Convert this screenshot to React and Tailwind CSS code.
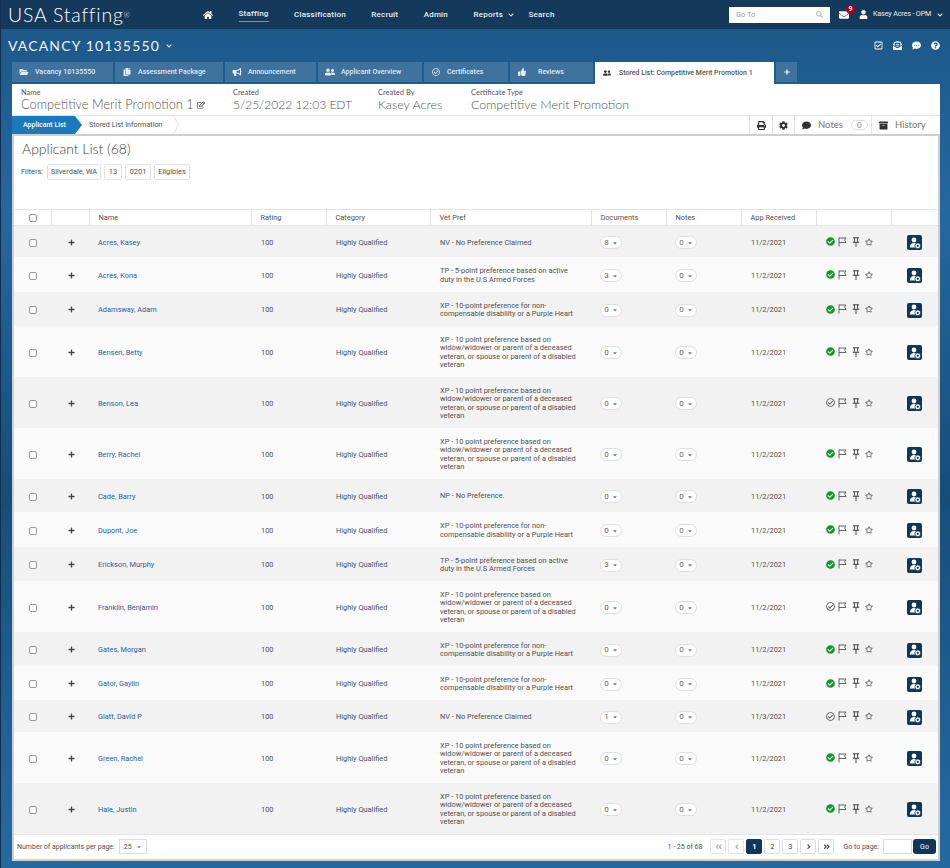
import React from "react";
import {
  FaHome, FaSearch, FaEnvelope, FaUser, FaChevronDown, FaRegCheckSquare, FaEnvelopeOpenText,
  FaCommentDots, FaQuestionCircle, FaFolderOpen, FaCopy, FaBullhorn, FaUserFriends, FaRegCheckCircle,
  FaThumbsUp, FaPlus, FaRegEdit, FaPrint, FaCog, FaComment, FaArchive, FaCheckCircle, FaRegStar,
  FaAngleDoubleLeft, FaAngleDoubleRight, FaAngleLeft, FaAngleRight, FaCaretDown,
} from "react-icons/fa";

const NV = ["NV - No Preference Claimed"];
const NP = ["NP - No Preference."];
const TP = ["TP - 5-point preference based on active", "duty in the U.S Armed Forces"];
const XP = ["XP - 10-point preference for non-", "compensable disability or a Purple Heart"];
const XW = [
  "XP - 10 point preference based on",
  "widow/widower or parent of a deceased",
  "veteran, or spouse or parent of a disabled",
  "veteran",
];

const applicants = [
  { name: "Acres, Kasey", vet: NV, docs: 8, h: "h-[31px]" },
  { name: "Acres, Kona", vet: TP, docs: 3, h: "h-[35px]" },
  { name: "Adamsway, Adam", vet: XP, docs: 0, h: "h-[34px]" },
  { name: "Bensen, Betty", vet: XW, docs: 0, h: "h-[51px]" },
  { name: "Benson, Lea", vet: XW, docs: 0, h: "h-[51px]", open: true },
  { name: "Berry, Rachel", vet: XW, docs: 0, h: "h-[51px]" },
  { name: "Cade, Barry", vet: NP, docs: 0, h: "h-[33px]" },
  { name: "Dupont, Joe", vet: XP, docs: 0, h: "h-[35px]" },
  { name: "Erickson, Murphy", vet: TP, docs: 3, h: "h-[34px]" },
  { name: "Franklin, Benjamin", vet: XW, docs: 0, h: "h-[51px]", open: true },
  { name: "Gates, Morgan", vet: XP, docs: 0, h: "h-[34px]" },
  { name: "Gator, Gaylin", vet: XP, docs: 0, h: "h-[34px]" },
  { name: "Glatt, David P", vet: NV, docs: 1, h: "h-[32px]", open: true, date: "11/3/2021" },
  { name: "Green, Rachel", vet: XW, docs: 0, h: "h-[51px]" },
  { name: "Hale, Justin", vet: XW, docs: 0, h: "h-[51px]" },
];

const tabs = [
  { label: "Vacancy 10135550", Icon: FaFolderOpen, w: "w-[101px]" },
  { label: "Assessment Package", Icon: FaCopy, w: "w-[108px]" },
  { label: "Announcement", Icon: FaBullhorn, w: "w-[91px]" },
  { label: "Applicant Overview", Icon: FaUserFriends, w: "w-[104px]" },
  { label: "Certificates", Icon: FaRegCheckCircle, w: "w-[84px]" },
  { label: "Reviews", Icon: FaThumbsUp, w: "w-[83px]", gap: "ml-[11px]" },
];

const infoFields = [
  { label: "Name", value: "Competitive Merit Promotion 1", box: "w-[221px] pl-[9px]", size: "text-[12.8px]", edit: true },
  { label: "Created", value: "5/25/2022 12:03 EDT", box: "w-[145px]", size: "text-[12px]" },
  { label: "Created By", value: "Kasey Acres", box: "w-[93px]", size: "text-[12.5px]" },
  { label: "Certificate Type", value: "Competitive Merit Promotion", box: "w-[200px]", size: "text-[12.5px]" },
];

const filters = [
  { label: "Silverdale, WA", w: "w-[54px]" },
  { label: "13", w: "w-[18px]" },
  { label: "0201", w: "w-[26px]" },
  { label: "Eligibles", w: "w-[36px]" },
];

const columns = ["", "", "Name", "Rating", "Category", "Vet Pref", "Documents", "Notes", "App Received", "", ""];

function FlagIcon() {
  return (
    <svg width="9" height="10" viewBox="0 0 9 10" fill="none" stroke="#555" strokeWidth="0.9">
      <path d="M1 0.5V9.5M1 1H8L6.6 3L8 5.5H1" />
    </svg>
  );
}

function PinIcon() {
  return (
    <svg width="8" height="10" viewBox="0 0 8 10" fill="none" stroke="#444" strokeWidth="1">
      <path d="M1 0.8H7M2.4 0.8V5M5.6 0.8V5M0.8 5.3H7.2M4 5.3V10" />
    </svg>
  );
}

function UserBadgeIcon() {
  return (
    <svg width="12" height="12" viewBox="0 0 12 12">
      <circle cx="5" cy="3" r="2.4" fill="#fff" />
      <path d="M0.8 10.5C0.8 7.5 2.5 6 5 6S9.2 7.5 9.2 10.5Z" fill="#fff" />
      <circle cx="8.8" cy="8.8" r="2.9" fill="#fff" stroke="#0f3557" strokeWidth="0.8" />
      <circle cx="8.8" cy="8.8" r="1.1" fill="#0f3557" />
    </svg>
  );
}

function CountPill({ value }) {
  return (
    <span className="inline-flex h-[13px] w-[22px] items-center justify-center gap-[3px] rounded-full border border-[#dedede] bg-white text-[8px] text-[#666]">
      {value}
      <FaCaretDown className="text-[6px] text-[#777]" />
    </span>
  );
}

function PageButton({ children, active, muted }) {
  const color = active ? "bg-[#0f3557] border-[#0f3557] text-white font-bold" : muted ? "bg-white border-[#e4e4e4] text-[#aaa]" : "bg-white border-[#dcdcdc] text-[#444]";
  return <span className={`flex h-[15px] w-[16px] items-center justify-center rounded-[2px] border text-[7.5px] ${color}`}>{children}</span>;
}

function ApplicantRow({ row, index }) {
  return (
    <tr className={`${row.h} [&>td]:pt-[3px] ${index % 2 === 0 ? "bg-[#f2f2f2]" : "bg-[#fafafa]"}`}>
      <td className="pl-[15px]">
        <span className="block h-[8px] w-[8px] rounded-[2px] border border-[#999] bg-white" />
      </td>
      <td className="pl-[17px]">
        <FaPlus className="mb-[1px] text-[7px] text-[#444]" />
      </td>
      <td className="pl-[9px] text-[#2d5f94]">{row.name}</td>
      <td className="pl-[10px]">100</td>
      <td className="pl-[10px]">Highly Qualified</td>
      <td className="pl-[10px] leading-[8.5px]">
        {row.vet.map((line) => (
          <div key={line} className="whitespace-nowrap">{line}</div>
        ))}
      </td>
      <td className="pl-[9px]"><CountPill value={row.docs} /></td>
      <td className="pl-[9px]"><CountPill value={0} /></td>
      <td className="pl-[10px]">{row.date || "11/2/2021"}</td>
      <td className="pl-[10px]">
        <div className="mb-[2px] flex items-center gap-[3px]">
          {row.open ? <FaRegCheckCircle className="text-[9px] text-[#555]" /> : <FaCheckCircle className="text-[9px] text-[#0c9a2a]" />}
          <FlagIcon />
          <span className="ml-[2px]"><PinIcon /></span>
          <FaRegStar className="ml-[2px] text-[8px] text-[#555]" />
        </div>
      </td>
      <td className="pl-[16px]">
        <span className="flex h-[15px] w-[15px] items-center justify-center rounded-[2px] bg-[#0f3557]">
          <UserBadgeIcon />
        </span>
      </td>
    </tr>
  );
}

export default function App() {
  return (
    <div className="flex h-[868px] w-[950px] flex-col overflow-hidden border-l border-[#12304d] bg-[linear-gradient(180deg,#1c5685_0%,#2468a0_25%,#154c78_58%,#174f7c_59%,#2468a0_95%)] font-['Roboto',sans-serif] text-[7.4px] text-[#505050]">
      <header className="flex h-[29px] shrink-0 items-center bg-[#15395a] pl-[7px] pr-[7px] text-white">
        <span className="w-[195px] whitespace-nowrap font-['Lato',sans-serif] text-[19.5px] font-light tracking-[0.8px]">
          USA Staffing<sup className="text-[7px] text-white">®</sup>
        </span>
        <nav className="flex items-center gap-[25.5px] text-[8px] font-medium tracking-[0.2px] text-[#e8eef4]">
          <FaHome className="text-[10px] text-white" />
          <span className="border-b border-[#4aa3e0] pb-[1px]">Staffing</span>
          <span>Classification</span>
          <span>Recruit</span>
          <span>Admin</span>
          <span className="flex items-center gap-[5px]">Reports <FaChevronDown className="text-[6px]" /></span>
          <span className="-ml-[11px]">Search</span>
        </nav>
        <div className="ml-auto flex h-[16px] w-[101px] items-center justify-between bg-white px-[7px] text-[#999]">
          Go To
          <FaSearch className="text-[7px] text-[#bbb]" />
        </div>
        <span className="relative ml-[9px]">
          <FaEnvelope className="text-[10px]" />
          <span className="absolute -right-[6px] -top-[5px] flex h-[9px] w-[9px] items-center justify-center rounded-full bg-[#b00018] text-[7px] font-bold">9</span>
        </span>
        <FaUser className="ml-[10px] text-[9px]" />
        <span className="ml-[5px] w-[58px] whitespace-nowrap text-[7.2px] tracking-[-0.15px] text-[#e8eef4]">Kasey Acres - OPM</span>
        <FaChevronDown className="ml-[6px] text-[6px]" />
      </header>

      <div className="flex h-[33px] shrink-0 items-center justify-between pl-[7px] pr-[10px] text-white">
        <span className="flex items-center gap-[6px] font-['Lato',sans-serif] text-[14px] tracking-[1.15px] text-[#eef3f8]">
          VACANCY 10135550 <FaChevronDown className="text-[6px]" />
        </span>
        <span className="flex items-center gap-[10px] text-[9px]">
          <FaRegCheckSquare />
          <FaEnvelopeOpenText />
          <FaCommentDots />
          <FaQuestionCircle />
        </span>
      </div>

      <div className="flex h-[22px] shrink-0 gap-[2px] pl-[11px]">
        {tabs.map(({ label, Icon, w, gap }) => (
          <div key={label} className={`flex h-[20px] ${w} items-center bg-[#3f729d] pl-[7px] text-[7px] font-medium text-[#dfe9f2]`}>
            <Icon className="w-[10px] shrink-0 text-[8px] text-[#e6edf4]" />
            <span className={`${gap || "ml-[6px]"} whitespace-nowrap`}>{label}</span>
          </div>
        ))}
        <div className="flex h-[22px] w-[179px] items-center bg-white pl-[8px] text-[7px] font-medium text-[#555]">
          <FaUserFriends className="text-[8px] text-[#333]" />
          <span className="ml-[8px] whitespace-nowrap">Stored List: Competitive Merit Promotion 1</span>
        </div>
        <div className="flex h-[20px] w-[21px] items-center justify-center bg-[#3f729d] text-white">
          <FaPlus className="text-[6px]" />
        </div>
      </div>

      <main className="mx-[11px] flex h-[777px] w-[928px] shrink-0 flex-col bg-white">
        <section className="flex h-[31px] shrink-0 pt-[4px]">
          {infoFields.map(({ label, value, box, size, edit }) => (
            <div key={label} className={`${box} font-['Lato',sans-serif] text-[#555]`}>
              <div className="text-[7.5px] leading-[9px]">{label}</div>
              <div className={`flex items-center gap-[3px] whitespace-nowrap font-light leading-[15px] ${size}`}>
                {value}
                {edit && <FaRegEdit className="text-[8px] text-[#444]" />}
              </div>
            </div>
          ))}
        </section>

        <section className="flex h-[19px] shrink-0 items-center border-t border-[#e2e2e2]">
          <span className="flex h-full w-[70px] items-center bg-[#1a7abc] pl-[11px] text-[7px] font-medium text-white [clip-path:polygon(0_0,90%_0,100%_50%,90%_100%,0_100%)]">
            Applicant List
          </span>
          <span className="ml-[7px] whitespace-nowrap text-[7.2px]">Stored List Information</span>
          <svg className="ml-[11px]" width="6" height="18" viewBox="0 0 6 18" fill="none" stroke="#ddd">
            <path d="M0.5 0L5.5 9L0.5 18" />
          </svg>
          <div className="ml-auto flex h-full items-center">
            <span className="flex h-full w-[23px] items-center justify-center border-l border-[#e2e2e2]"><FaPrint className="text-[9px] text-[#333]" /></span>
            <span className="flex h-full w-[22px] items-center justify-center border-l border-[#e2e2e2]"><FaCog className="text-[9px] text-[#333]" /></span>
            <span className="flex h-full w-[77px] items-center border-l border-[#e2e2e2] pl-[7px] font-['Lato',sans-serif] text-[9.5px] text-[#777]">
              <FaComment className="text-[9px] text-[#333]" />
              <span className="ml-[7px]">Notes</span>
              <span className="ml-[8px] flex h-[10px] w-[17px] items-center justify-center rounded-full border border-[#ddd] text-[8px]">0</span>
            </span>
            <span className="flex h-full w-[69px] items-center border-l border-[#e2e2e2] pl-[7px] font-['Lato',sans-serif] text-[9.5px] text-[#777]">
              <FaArchive className="text-[9px] text-[#333]" />
              <span className="ml-[7px]">History</span>
            </span>
          </div>
        </section>

        <section className="flex min-h-0 flex-1 flex-col border-2 border-[#cfcfcf]">
          <h1 className="pl-[8px] pt-[4px] font-['Lato',sans-serif] text-[14px] font-light leading-[18px] text-[#444]">Applicant List (68)</h1>
          <div className="mt-[6px] flex h-[16px] items-center pl-[7px]">
            <span className="w-[26px]">Filters:</span>
            <div className="flex gap-[3px]">
              {filters.map((f) => (
                <span key={f.label} className={`flex h-[16px] ${f.w} items-center justify-center whitespace-nowrap rounded-[2px] border border-[#e0e0e0]`}>{f.label}</span>
              ))}
            </div>
          </div>

          <table className="mt-[29px] w-full table-fixed border-t border-[#e4e4e4]">
            <colgroup>
              <col className="w-[37px]" />
              <col className="w-[38px]" />
              <col className="w-[162px]" />
              <col className="w-[75px]" />
              <col className="w-[104px]" />
              <col className="w-[161px]" />
              <col className="w-[75px]" />
              <col className="w-[75px]" />
              <col className="w-[75px]" />
              <col className="w-[75px]" />
              <col className="w-[47px]" />
            </colgroup>
            <thead>
              <tr className="h-[16px]">
                {columns.map((c, i) => (
                  <th key={i} className={`border-b border-[#e4e4e4] pl-[9px] text-left font-normal ${i === 0 ? "" : "border-l"}`}>
                    {i === 0 ? <span className="ml-[6px] block h-[8px] w-[8px] rounded-[2px] border border-[#999]" /> : c}
                  </th>
                ))}
              </tr>
            </thead>
            <tbody>
              {applicants.map((row, i) => (
                <ApplicantRow key={row.name} row={row} index={i} />
              ))}
            </tbody>
          </table>

          <footer className="flex flex-1 items-center border-t border-[#e4e4e4] pl-[3px] pr-[2px] text-[7px]">
            <span>Number of applicants per page:</span>
            <span className="ml-[4px] flex h-[15px] w-[28px] items-center justify-between border border-[#dcdcdc] px-[4px]">
              25 <FaCaretDown className="text-[6px] text-[#888]" />
            </span>
            <span className="ml-auto">1 - 25 of 68</span>
            <div className="ml-[8px] flex gap-[2px]">
              <PageButton muted><FaAngleDoubleLeft /></PageButton>
              <PageButton muted><FaAngleLeft /></PageButton>
              <PageButton active>1</PageButton>
              <PageButton>2</PageButton>
              <PageButton>3</PageButton>
              <PageButton><FaAngleRight /></PageButton>
              <PageButton><FaAngleDoubleRight /></PageButton>
            </div>
            <span className="ml-[9px]">Go to page:</span>
            <span className="ml-[4px] h-[15px] w-[29px] border border-[#dcdcdc]" />
            <span className="ml-[1px] flex h-[15px] w-[23px] items-center justify-center rounded-[3px] bg-[#0f3557] text-white">Go</span>
          </footer>
        </section>
      </main>
    </div>
  );
}
